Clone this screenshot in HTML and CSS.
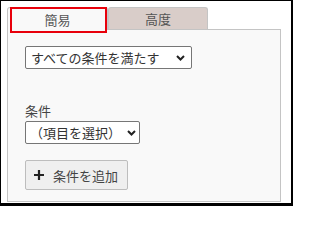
FILE: index.html
```html
<!DOCTYPE html>
<html lang="ja">
<head>
<meta charset="utf-8">
<link rel="stylesheet" href="styles.css">
</head>
<body>
<div class="frame">
  <div class="tabs">
    <div class="tab tab-active"><span>簡易</span></div>
    <div class="tab tab-idle"><span>高度</span></div>
  </div>
  <div class="panel">
    <div class="select select-match">
      <select><option>すべての条件を満たす</option></select>
      <svg class="chev" width="9" height="6" viewBox="0 0 9 6"><path d="M1 1 L4.5 4.5 L8 1" fill="none" stroke="#222" stroke-width="2"/></svg>
    </div>
    <div class="field">
      <label class="label">条件</label>
      <div class="select select-item">
        <select><option>（項目を選択）</option></select>
        <svg class="chev" width="9" height="6" viewBox="0 0 9 6"><path d="M1 1 L4.5 4.5 L8 1" fill="none" stroke="#222" stroke-width="2"/></svg>
      </div>
    </div>
    <button class="add" type="button">
      <svg class="plus" width="10" height="10" viewBox="0 0 10 10"><path d="M5 0 V10 M0 5 H10" stroke="#222" stroke-width="2.2"/></svg>
      <span>条件を追加</span>
    </button>
  </div>
</div>
</body>
</html>
```
FILE: styles.css
```css
html, body {
  margin: 0;
  padding: 0;
  background: #fff;
}
body {
  font-family: "Noto Sans CJK JP", "Noto Sans", sans-serif;
  font-size: 13px;
  color: #333;
}
.frame {
  box-sizing: border-box;
  width: 293px;
  height: 206px;
  border-style: solid;
  border-color: #000;
  border-width: 1px 2px 3px 1px;
  padding: 6px 10px 1px 6px;
  background: #fff;
}
.tabs {
  display: flex;
  height: 22px;
  position: relative;
  z-index: 1;
}
.tab {
  box-sizing: border-box;
  display: flex;
  align-items: center;
  justify-content: center;
  color: #555;
  font-size: 13px;
  border: 1px solid #c4c4c4;
  border-bottom: none;
  border-radius: 3px 3px 0 0;
}
.tab span {
  position: relative;
  top: -1px;
}
.tab-active {
  width: 101px;
  height: 23px;
  background: #f9f9f9;
  position: relative;
  padding-top: 2px;
}
.tab-active::after {
  content: "";
  position: absolute;
  left: 2px;
  top: -1px;
  width: 97px;
  height: 26px;
  box-sizing: border-box;
  border: 2px solid #e8000b;
}
.tab-idle {
  width: 100px;
  height: 22px;
  background: #d9cdc9;
  padding-top: 2px;
}
.panel {
  box-sizing: border-box;
  height: 173px;
  width: 274px;
  border: 1px solid #c4c4c4;
  background: #f9f9f9;
  padding: 16px 0 0 17px;
}
.select {
  position: relative;
  height: 23px;
}
.select select {
  appearance: none;
  -webkit-appearance: none;
  box-sizing: border-box;
  height: 23px;
  width: 100%;
  margin: 0;
  border: 1px solid #767676;
  border-radius: 2px;
  background: #fff;
  color: #333;
  font-family: "Noto Sans CJK JP", "Noto Sans", sans-serif;
  font-size: 13px;
  padding: 0 0 0 5px;
  line-height: 21px;
}
.select-match {
  width: 167px;
}
.select-item {
  width: 115px;
}
.select-item select {
  padding-left: 4px;
}
.chev {
  position: absolute;
  top: 9px;
  right: 7px;
  pointer-events: none;
}
.select-item .chev {
  right: 4px;
}
.field {
  margin-top: 34px;
}
.label {
  display: block;
  height: 18px;
  line-height: 16px;
  color: #444;
}
.add {
  box-sizing: border-box;
  margin-top: 16px;
  width: 103px;
  height: 30px;
  display: flex;
  align-items: center;
  padding: 0 0 0 8px;
  gap: 9px;
  background: #efefef;
  border: 1px solid #bdbdbd;
  border-radius: 2px;
  color: #444;
  font-family: "Noto Sans CJK JP", "Noto Sans", sans-serif;
  font-size: 13px;
}
.plus {
  flex: none;
}
```
